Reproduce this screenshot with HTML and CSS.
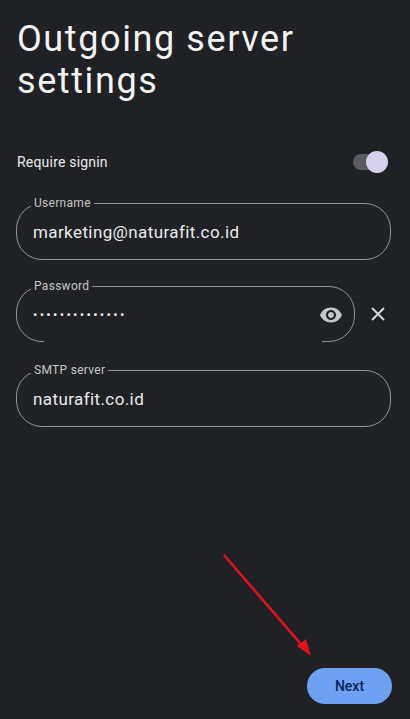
FILE: index.html
```html
<!DOCTYPE html>
<html lang="en">
<head>
<meta charset="utf-8">
<title>Outgoing server settings</title>
<link rel="stylesheet" href="styles.css">
</head>
<body>
<main class="screen">
  <h1 class="title">Outgoing server<br>settings</h1>

  <div class="toggle-row">
    <span class="toggle-label">Require signin</span>
    <span class="switch" role="switch" aria-checked="true"><span class="knob"></span></span>
  </div>

  <fieldset class="field">
    <legend>Username</legend>
    <div class="value">marketing@naturafit.co.id</div>
  </fieldset>

  <div class="pw-row">
    <fieldset class="field field-pw">
      <legend>Password</legend>
      <div class="value dots">••••••••••••••</div>
      <svg class="eye" viewBox="0 0 24 24" width="24" height="24" aria-hidden="true">
        <path d="M12 4.5C7 4.5 2.73 7.61 1 12c1.73 4.39 6 7.5 11 7.5s9.27-3.11 11-7.5c-1.73-4.390-6-7.5-11-7.5zM12 17c-2.76 0-5-2.24-5-5s2.24-5 5-5 5 2.24 5 5-2.24 5-5 5zm0-8c-1.66 0-3 1.34-3 3s1.34 3 3 3 3-1.34 3-3-1.34-3-3-3z"/>
      </svg>
    </fieldset>
    <button class="clear" type="button" aria-label="Clear">
      <svg viewBox="0 0 16 16" width="16" height="16" aria-hidden="true">
        <path d="M2 2L14 14M14 2L2 14"/>
      </svg>
    </button>
  </div>

  <fieldset class="field field-smtp">
    <legend>SMTP server</legend>
    <div class="value">naturafit.co.id</div>
  </fieldset>

  <footer class="actions">
    <button class="next" type="button">Next</button>
  </footer>

  <svg class="pointer" width="410" height="719" viewBox="0 0 410 719" aria-hidden="true">
    <line x1="224" y1="555" x2="306" y2="650" />
    <path d="M311 656 L297 646 L306 639 Z" />
  </svg>
</main>
</body>
</html>
```

FILE: styles.css
```css
* { box-sizing: border-box; }

html, body {
  margin: 0;
  padding: 0;
  background: #202124;
}

.screen {
  position: relative;
  width: 410px;
  height: 719px;
  display: flex;
  flex-direction: column;
  font-family: Roboto, "Noto Sans", sans-serif;
  color: #e8eaed;
  overflow: hidden;
}

.title {
  margin: 18px 0 0 17px;
  font-size: 36px;
  font-weight: 400;
  line-height: 42px;
  letter-spacing: 1.6px;
  color: #f1f3f4;
}

.toggle-row {
  display: flex;
  align-items: center;
  justify-content: space-between;
  margin: 48px 0 0 17px;
  height: 24px;
}

.toggle-label {
  font-size: 14px;
  letter-spacing: 0.2px;
  color: #e8eaed;
}

.switch {
  position: relative;
  width: 30px;
  height: 16px;
  margin-right: 27px;
  border-radius: 8px;
  background: #5b5b61;
  display: flex;
  align-items: center;
  justify-content: flex-end;
}

.knob {
  width: 22px;
  height: 22px;
  border-radius: 50%;
  background: #d6d2ec;
  margin-right: -5px;
}

.field {
  position: relative;
  margin: 0 0 0 16px;
  width: 375px;
  height: 63px;
  padding: 0 14px;
  border: 1.5px solid #8f9294;
  border-radius: 26px;
  min-width: 0;
}

.field legend {
  padding: 0 3px;
  font-size: 12px;
  line-height: 12px;
  letter-spacing: 0.3px;
  color: #c4c7c5;
}

.toggle-row + .field { margin-top: 23px; }

.value {
  padding: 12px 0 0 2px;
  font-size: 17px;
  line-height: 22px;
  letter-spacing: 0.4px;
  color: #e8eaed;
}

.dots {
  font-size: 13px;
  letter-spacing: 2.3px;
  color: #eceef0;
}

.pw-row {
  display: flex;
  align-items: center;
  margin-top: 20px;
}

.field-pw {
  width: 339px;
  height: 62px;
  display: flex;
  align-items: center;
  justify-content: space-between;
}

.field-pw .value { padding-top: 0; margin-top: -3px; }

.field-pw .eye {
  fill: #c4c7c5;
  margin-right: -3px;
  margin-top: -4px;
}

/* the outline's lower edge is only partly drawn in this frame */
.field-pw::after {
  content: "";
  position: absolute;
  left: 27px;
  right: 32px;
  bottom: -3px;
  height: 5px;
  background: #202124;
}

.clear {
  margin: 6px 0 0 15px;
  padding: 0;
  border: 0;
  background: none;
  width: 16px;
  height: 16px;
  display: flex;
}

.clear svg path {
  stroke: #d5d7d9;
  stroke-width: 2;
  fill: none;
}

.field-smtp { margin-top: 22px; }

/* upper edge of the SMTP outline fades out past the label */
.field-smtp::after {
  content: "";
  position: absolute;
  left: 84px;
  right: 28px;
  top: 3px;
  height: 5px;
  background: #202124;
}

.actions {
  margin-top: auto;
  display: flex;
  justify-content: flex-end;
  padding: 0 18px 15px 0;
}

.next {
  width: 85px;
  height: 36px;
  border: 0;
  border-radius: 18px;
  background: #6fa1f2;
  color: #0b2655;
  font-family: Roboto, "Noto Sans", sans-serif;
  font-size: 14px;
  font-weight: 500;
}

.pointer {
  position: absolute;
  left: 0;
  top: 0;
  pointer-events: none;
}

.pointer line {
  stroke: #e3121a;
  stroke-width: 2.5;
}

.pointer path { fill: #e3121a; }
```
